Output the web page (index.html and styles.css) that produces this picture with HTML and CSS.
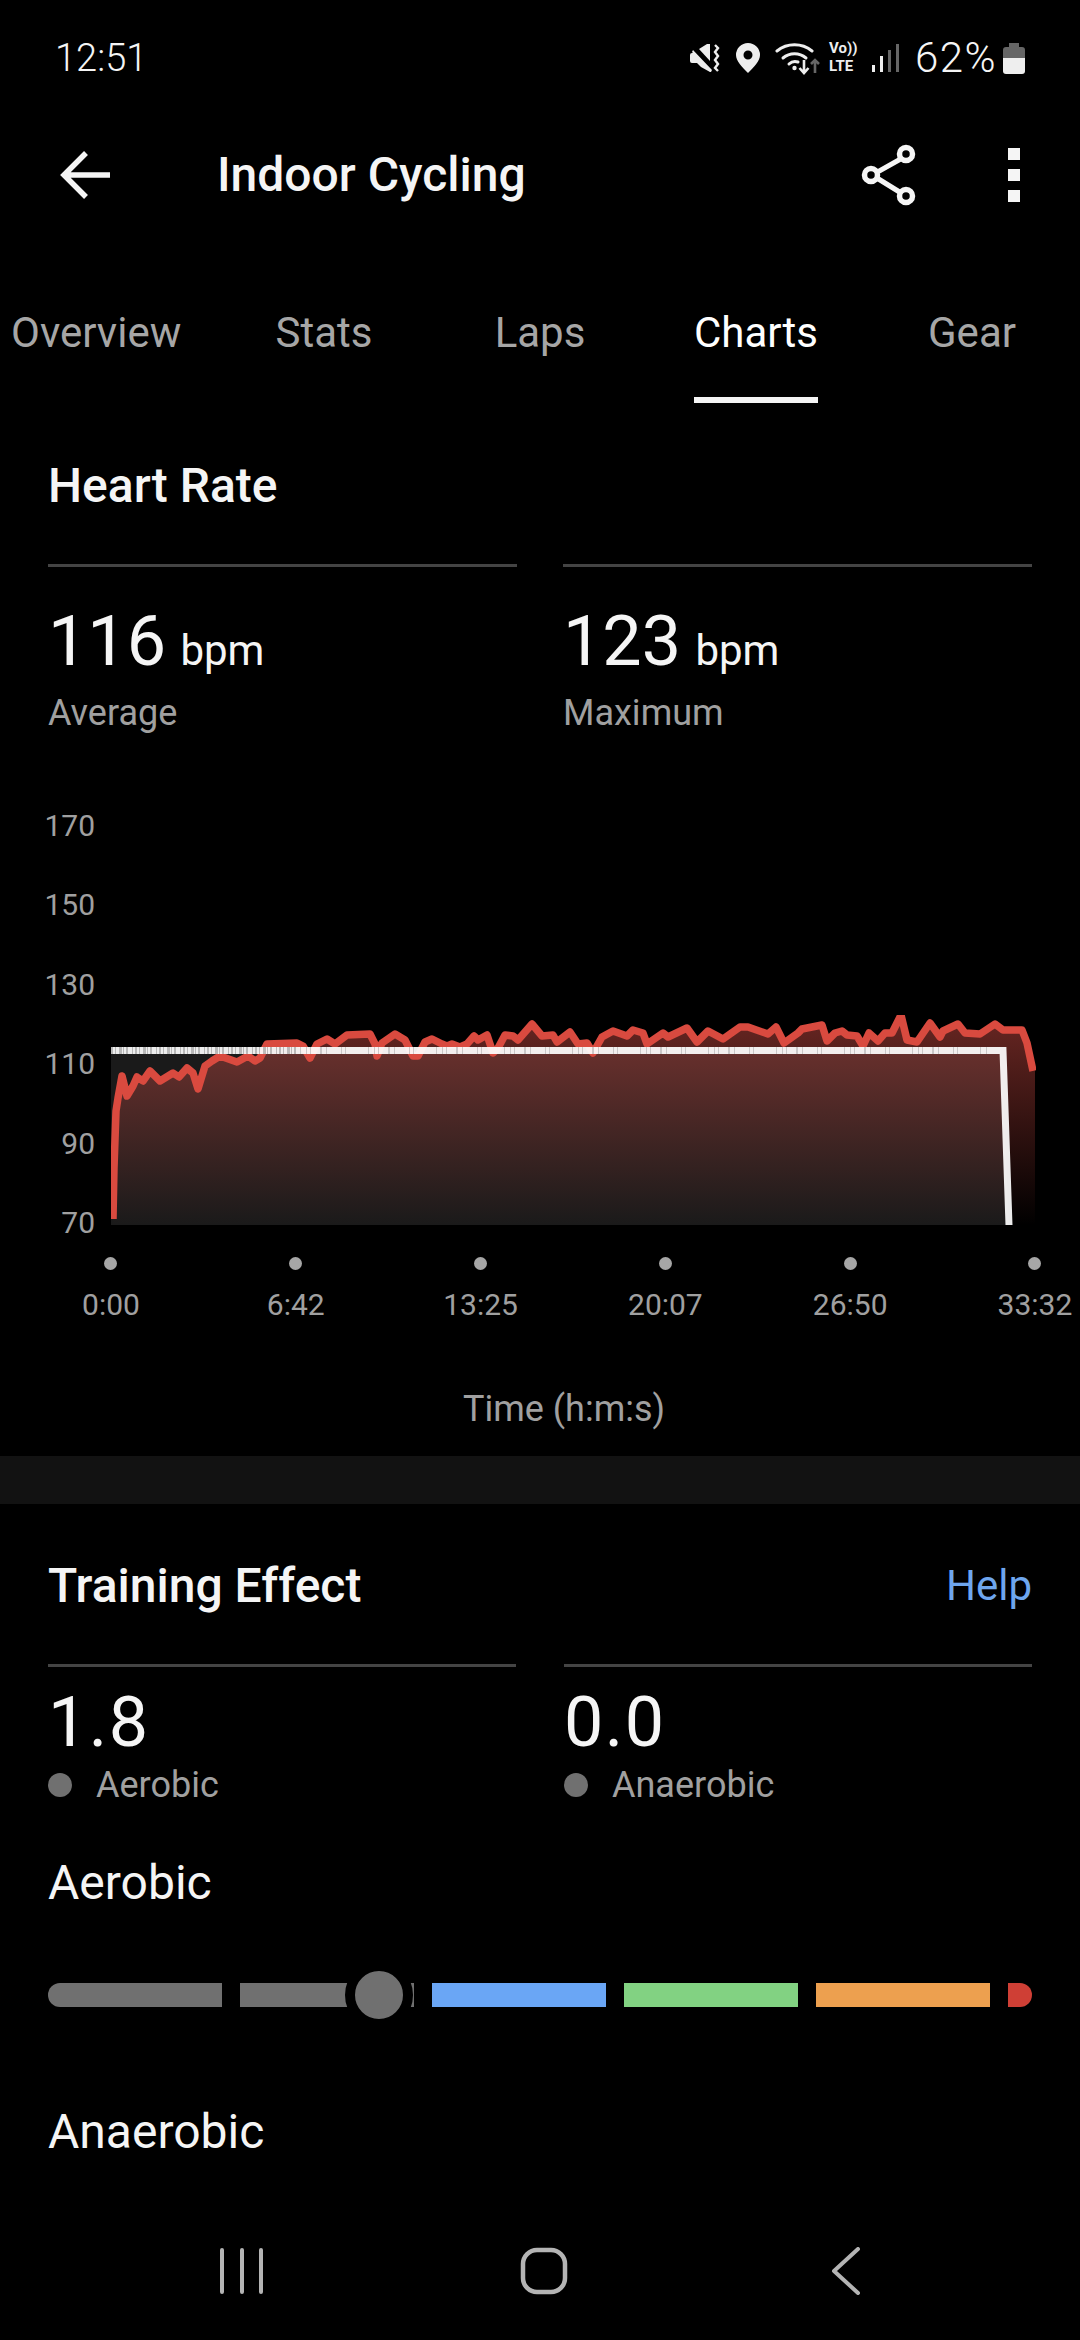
FILE: index.html
```html
<!DOCTYPE html>
<html lang="en">
<head>
<meta charset="utf-8">
<title>Indoor Cycling</title>
<link rel="stylesheet" href="styles.css">
</head>
<body>
<div class="screen">
  <header class="status">
    <span class="time">12:51</span>
    <div class="status-right">
      <svg class="ic-mute" width="30" height="28" viewBox="0 0 30 28"><path d="M0 11a2 2 0 0 1 2-2h1l-1-1 1-2 19 20-1 2h-1L11 23l-4-4H2a2 2 0 0 1-2-2zM9 5l8-5h3v17z" fill="#eee"/><path d="M25 1l3 3-3 4 3 4-3 4 3 4-3 4 3 3" fill="none" stroke="#eee" stroke-width="2.4"/></svg>
      <svg class="ic-pin" width="24" height="30" viewBox="0 0 24 30"><path fill-rule="evenodd" d="M12 0a12 12 0 0 1 12 12c0 6-6 12-12 18C6 24 0 18 0 12A12 12 0 0 1 12 0zm0 7.500a4.500 4.500 0 1 0 0 9 4.500 4.500 0 0 0 0-9z" fill="#eee"/></svg>
      <svg class="ic-wifi" width="46" height="34" viewBox="0 0 46 34"><g fill="none" stroke="#eee" stroke-width="3" stroke-linecap="round"><path d="M2 10a28 28 0 0 1 35 0"/><path d="M8 17a18 18 0 0 1 23 0"/><path d="M14 23a9 9 0 0 1 9-2"/></g><circle cx="19.500" cy="27" r="2.200" fill="#eee"/><path d="M29 19v13m-4.500-5l4.500 5 4.500-5" fill="none" stroke="#eee" stroke-width="2.600"/><path d="M40 32V19m-4 4l4-4 4 4" fill="none" stroke="#666" stroke-width="2.600"/></svg>
      <div class="volte"><span>Vo))</span><span>LTE</span></div>
      <div class="signal"><i class="bar b1"></i><i class="bar b2"></i><i class="bar b3"></i><i class="bar b4"></i></div>
      <span class="pct">62%</span>
      <svg class="ic-batt" width="22" height="31" viewBox="0 0 22 31"><path d="M6 0h10v4h3a3 3 0 0 1 3 3v8H0V7a3 3 0 0 1 3-3h3z" fill="#666"/><path d="M0 15h22v13a3 3 0 0 1-3 3H3a3 3 0 0 1-3-3z" fill="#eee"/></svg>
    </div>
  </header>

  <div class="appbar">
    <svg class="ic-back" width="50" height="48" viewBox="0 0 50 48"><path d="M50 24H4M26 2L4 24l22 22" fill="none" stroke="#f5f5f5" stroke-width="5.500"/></svg>
    <h1 class="title">Indoor Cycling</h1>
    <svg class="ic-share" width="56" height="62" viewBox="0 0 56 62" fill="none" stroke="#f5f5f5"><path d="M45 12L11 31l34 21" stroke-width="5"/><circle cx="45" cy="10" r="6.500" fill="#000" stroke-width="5.500"/><circle cx="10" cy="31" r="6.500" fill="#000" stroke-width="5.500"/><circle cx="45" cy="52" r="6.500" fill="#000" stroke-width="5.500"/></svg>
    <div class="kebab"><i></i><i></i><i></i></div>
  </div>

  <nav class="tabs">
    <a class="tab tab-first">Overview</a>
    <a class="tab">Stats</a>
    <a class="tab">Laps</a>
    <a class="tab tab-active">Charts</a>
    <a class="tab">Gear</a>
  </nav>

  <section class="sect">
    <h2 class="sect-title">Heart Rate</h2>
    <div class="stats stats-hr">
      <div class="stat"><div class="val">116 <small>bpm</small></div><div class="lbl">Average</div></div>
      <div class="stat"><div class="val">123 <small>bpm</small></div><div class="lbl">Maximum</div></div>
    </div>
  </section>

  <div class="chart">
    <div class="y-axis"><span>170</span><span>150</span><span>130</span><span>110</span><span>90</span><span>70</span></div>
    <svg class="plot" width="925" height="210" viewBox="111 1014 925 210">
      <defs>
        <linearGradient id="hrfill" gradientUnits="userSpaceOnUse" x1="0" y1="1014" x2="0" y2="1224">
          <stop offset="0" stop-color="#dc5048" stop-opacity=".48"/>
          <stop offset="1" stop-color="#dc5048" stop-opacity="0"/>
        </linearGradient>
      </defs>
      <path d="M111 1046H1001L1009 1224H111Z" fill="#1a1a1a"/>
      <path fill="url(#hrfill)" d="M113 1224V1218L114 1167 116 1110 118 1097 122 1075 127 1095 133 1085 137 1076 143 1080 150 1070 160 1080 173 1072 179 1076 187 1067 193 1072 198 1088 205 1065 212 1060 220 1055 237 1061 248 1055 255 1060 260 1057 267 1043 297 1042 303 1045 310 1057 317 1043 327 1038 335 1043 347 1034 370 1033 375 1043 377 1055 382 1042 395 1033 405 1039 413 1055 418 1055 425 1041 432 1038 442 1043 447 1045 452 1043 460 1046 467 1043 474 1035 478 1039 487 1034 493 1052 498 1047 505 1034 513 1035 518 1039 532 1023 542 1035 553 1034 557 1041 570 1031 578 1043 587 1042 593 1052 602 1036 613 1030 627 1035 633 1029 643 1032 647 1043 663 1032 668 1036 687 1027 697 1041 708 1030 723 1038 740 1026 748 1026 768 1033 776 1026 784 1042 798 1032 802 1028 822 1024 827 1040 835 1032 842 1030 847 1034 857 1035 863 1045 869 1032 878 1040 885 1032 892 1032 901 1014 907 1039 917 1041 930 1022 940 1036 943 1030 958 1023 965 1032 980 1033 995 1023 1003 1029 1022 1029 1027 1042 1035 1070V1224Z"/>
      <path fill="none" stroke="#d94a3f" stroke-width="7.500" stroke-linejoin="round" d="M113 1218L114 1167 116 1110 118 1097 122 1075 127 1095 133 1085 137 1076 143 1080 150 1070 160 1080 173 1072 179 1076 187 1067 193 1072 198 1088 205 1065 212 1060 220 1055 237 1061 248 1055 255 1060 260 1057 267 1043 297 1042 303 1045 310 1057 317 1043 327 1038 335 1043 347 1034 370 1033 375 1043 377 1055 382 1042 395 1033 405 1039 413 1055 418 1055 425 1041 432 1038 442 1043 447 1045 452 1043 460 1046 467 1043 474 1035 478 1039 487 1034 493 1052 498 1047 505 1034 513 1035 518 1039 532 1023 542 1035 553 1034 557 1041 570 1031 578 1043 587 1042 593 1052 602 1036 613 1030 627 1035 633 1029 643 1032 647 1043 663 1032 668 1036 687 1027 697 1041 708 1030 723 1038 740 1026 748 1026 768 1033 776 1026 784 1042 798 1032 802 1028 822 1024 827 1040 835 1032 842 1030 847 1034 857 1035 863 1045 869 1032 878 1040 885 1032 892 1032 901 1014 907 1039 917 1041 930 1022 940 1036 943 1030 958 1023 965 1032 980 1033 995 1023 1003 1029 1022 1029 1027 1042 1033 1070"/>
      <path d="M111 1049.500H1003L1009 1224" fill="none" stroke="#fff" stroke-width="7" stroke-opacity=".92"/>
      <path d="M111 1049.500H300" fill="none" stroke="#8c8c8c" stroke-width="7" stroke-opacity=".55" stroke-dasharray="2 2 1 3 3 1 1 2 2 4 1 2"/>
      <path d="M300 1049.500H990" fill="none" stroke="#8c8c8c" stroke-width="7" stroke-opacity=".4" stroke-dasharray="1 5 1 3 1 9 2 4 1 14 1 3 1 22"/>
    </svg>
  </div>
  <div class="x-axis">
    <div class="tick"><i></i><span>0:00</span></div>
    <div class="tick"><i></i><span>6:42</span></div>
    <div class="tick"><i></i><span>13:25</span></div>
    <div class="tick"><i></i><span>20:07</span></div>
    <div class="tick"><i></i><span>26:50</span></div>
    <div class="tick"><i></i><span>33:32</span></div>
  </div>
  <div class="x-title">Time (h:m:s)</div>

  <div class="band"></div>

  <section class="sect sect-te">
    <div class="sect-head">
      <h2 class="sect-title">Training Effect</h2>
      <a class="help">Help</a>
    </div>
    <div class="stats stats-te">
      <div class="stat"><div class="val">1.8</div><div class="lbl lbl-dot">Aerobic</div></div>
      <div class="stat"><div class="val">0.0</div><div class="lbl lbl-dot">Anaerobic</div></div>
    </div>
    <h3 class="sub sub-aer">Aerobic</h3>
    <div class="gauge">
      <div class="track">
        <i class="seg grey"></i><i class="seg grey"></i><i class="seg blue"></i><i class="seg green"></i><i class="seg orange"></i><i class="seg red"></i>
      </div>
      <span class="knob"></span>
    </div>
    <h3 class="sub sub-ana">Anaerobic</h3>
  </section>

  <footer class="navbar">
    <svg width="44" height="46" viewBox="0 0 44 46"><path d="M2 2v42M22 2v42M41 2v42" fill="none" stroke="#b4b4b4" stroke-width="4" stroke-linecap="round"/></svg>
    <svg width="48" height="48" viewBox="0 0 48 48"><rect x="3" y="3" width="42" height="42" rx="14" fill="none" stroke="#b4b4b4" stroke-width="4.500"/></svg>
    <svg width="30" height="48" viewBox="0 0 30 48"><path d="M27 2L3 24l24 22" fill="none" stroke="#b4b4b4" stroke-width="4" stroke-linecap="round" stroke-linejoin="round"/></svg>
  </footer>
</div>
</body>
</html>
```
FILE: styles.css
```css
* { box-sizing: border-box; }
html, body { margin: 0; padding: 0; background: #000; }
.screen {
  width: 1080px; height: 2340px; overflow: hidden; background: #000;
  color: #f5f5f5; font-family: Roboto, "Liberation Sans", sans-serif;
  display: flex; flex-direction: column;
}
h1, h2, h3 { margin: 0; font-weight: 400; }

.status { height: 116px; flex: none; display: flex; align-items: center; justify-content: space-between; padding: 0 55px 0 55px; }
.time { font-size: 38px; font-weight: 300; line-height: 48px; }
.status-right { display: flex; align-items: center; }
.ic-mute { margin-right: 16px; }
.ic-pin { margin-right: 15px; }
.ic-wifi { margin-right: 8px; }
.volte { display: flex; flex-direction: column; width: 32px; margin-right: 11px; font-size: 15px; font-weight: 700; line-height: 17.6px; color: #eee; white-space: nowrap; }
.signal { display: flex; align-items: flex-end; gap: 5px; height: 28px; margin-right: 16px; }
.bar { display: block; width: 3px; }
.b1 { height: 7px; background: #eee; }
.b2 { height: 16px; background: #eee; }
.b3 { height: 22px; background: #666; }
.b4 { height: 28px; background: #666; }
.pct { font-size: 42px; font-weight: 300; line-height: 48px; width: 88px; letter-spacing: 1.5px; white-space: nowrap; }

.appbar { height: 118px; flex: none; display: flex; align-items: center; padding-left: 60px; }
.title { font-size: 48px; font-weight: 500; line-height: 56px; margin-left: 107px; }
.ic-share { margin-left: auto; }
.kebab { display: flex; flex-direction: column; gap: 9px; margin: 0 60px 0 91px; }
.kebab i { display: block; width: 12px; height: 12px; background: #f5f5f5; }

.tabs { height: 169px; flex: none; display: grid; grid-template-columns: repeat(5, 216px); align-items: end; }
.tab { font-size: 42px; line-height: 46px; color: #a6a6a6; justify-self: center; padding-bottom: 47px; }
.tab-first { justify-self: start; padding-left: 11px; }
.tab-active { color: #fff; padding-bottom: 41px; border-bottom: 6px solid #f5f5f5; }

.sect { padding: 55px 48px 0; flex: none; }
.sect-te { padding-top: 54px; }
.sect-title { font-size: 48px; font-weight: 500; line-height: 56px; }
.sect-head { display: flex; justify-content: space-between; align-items: flex-start; }
.help { font-size: 42px; line-height: 56px; color: #6ea6ee; }

.stats { display: grid; }
.stats-hr { grid-template-columns: 469px 469px; gap: 46px; margin-top: 50px; }
.stats-te { grid-template-columns: 468px 468px; gap: 48px; margin-top: 50px; }
.stat { border-top: 3px solid #444; }
.stats-hr .stat { padding-top: 32px; }
.stats-te .stat { padding-top: 13px; }
.stats-te .val { letter-spacing: 1.5px; }
.val { font-size: 70px; line-height: 84px; word-spacing: -3px; }
.val small { font-size: 42px; }
.lbl { font-size: 36px; line-height: 44px; color: #a0a0a0; margin-top: -2px; }
.lbl-dot { display: flex; align-items: center; line-height: 40px; margin-top: 1px; }
.lbl-dot::before { content: ""; width: 24px; height: 24px; border-radius: 50%; background: #707070; margin-right: 24px; }

.chart { display: flex; height: 437px; flex: none; margin-top: 71px; }
.y-axis { width: 95px; display: flex; flex-direction: column; justify-content: space-between; align-items: flex-end; font-size: 30px; line-height: 40px; color: #a0a0a0; }
.plot { display: block; margin-left: 16px; margin-top: 209px; flex: none; }
.x-axis { display: flex; flex: none; margin-left: 18.6px; width: 1109px; }
.tick { flex: 0 0 184.8px; display: flex; flex-direction: column; align-items: center; }
.tick i { display: block; width: 13px; height: 13px; border-radius: 50%; background: #a6a6a6; margin-top: 14px; }
.tick span { font-size: 30px; line-height: 36px; color: #a0a0a0; margin-top: 17px; }
.x-title { flex: none; font-size: 36px; line-height: 44px; color: #a0a0a0; text-align: center; padding-left: 48px; margin-top: 64px; }
.band { flex: none; height: 48px; background: #121212; margin-top: 25px; }

.sub { font-size: 48px; line-height: 56px; }
.sub-aer { margin-top: 50px; }
.sub-ana { margin-top: 97px; }
.gauge { position: relative; margin-top: 72px; }
.track { display: flex; gap: 18px; height: 24px; width: 984px; border-radius: 12px; overflow: hidden; }
.seg { display: block; flex: 0 0 174px; }
.seg.red { flex: 0 0 24px; }
.grey { background: #707070; }
.blue { background: #6aa6f5; }
.green { background: #82d282; }
.orange { background: #eda04f; }
.red { background: #cf3f35; }
.knob { position: absolute; left: 297px; top: -22px; width: 68px; height: 68px; border-radius: 50%; background: #707070; border: 10px solid #000; }

.navbar { flex: none; margin-top: 87px; display: grid; grid-template-columns: repeat(3, 302px); padding-left: 91px; justify-items: center; align-items: center; }
```
